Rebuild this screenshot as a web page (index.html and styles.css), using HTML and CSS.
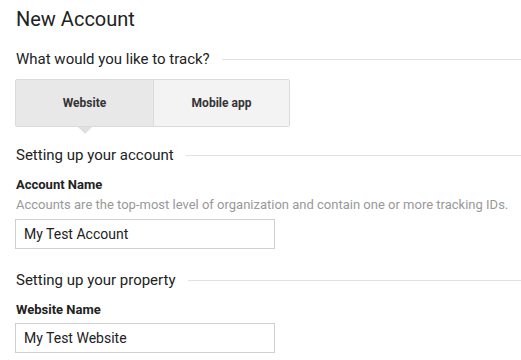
FILE: index.html
```html
<!DOCTYPE html>
<html lang="en">
<head>
  <meta charset="UTF-8" />
  <meta name="viewport" content="width=device-width, initial-scale=1.0" />
  <title>New Account</title>
  <link rel="stylesheet" href="styles.css">
</head>
<body>
  <h1>New Account</h1>

  <div class="section-title">
    <span>What would you like to track?</span>
  </div>
  <div class="tabs">
    <button class="tab active">Website</button>
    <button class="tab">Mobile app</button>
  </div>

  <div class="section-title account-title">
    <span>Setting up your account</span>
  </div>
  <label class="field-label" for="accountName">Account Name</label>
  <p class="hint">Accounts are the top-most level of organization and contain one or more tracking IDs.</p>
  <input id="accountName" class="text-input" type="text" value="My Test Account">

  <div class="section-title property-title">
    <span>Setting up your property</span>
  </div>
  <label class="field-label" for="websiteName">Website Name</label>
  <input id="websiteName" class="text-input" type="text" value="My Test Website">
</body>
</html>
```

FILE: styles.css
```css
body {
  font-family: Roboto, 'Noto Sans', sans-serif;
  margin: 0;
  padding: 7px 0 0 15px;
  background: #fff;
  color: #333;
  overflow: hidden;
}
h1 {
  font-size: 20px;
  line-height: 24px;
  font-weight: 400;
  color: #222;
  margin: 0 0 18px 1px;
}
.section-title {
  display: flex;
  align-items: center;
  gap: 12px;
  font-size: 15px;
  line-height: 20px;
  color: #222;
  margin-left: 1px;
}
.section-title::after {
  content: '';
  flex: 1;
  height: 1px;
  background: #e2e2e2;
}
.tabs {
  display: flex;
  width: 275px;
  height: 48px;
  margin-top: 10px;
  box-sizing: border-box;
  border: 1px solid #dadada;
  border-radius: 2px;
}
.tab {
  position: relative;
  flex: 0 0 137px;
  border: none;
  background: #f3f3f3;
  font-family: inherit;
  font-size: 12px;
  font-weight: 700;
  color: #333;
  padding: 0;
  cursor: pointer;
}
.tab + .tab {
  flex: 1;
  border-left: 1px solid #dadada;
}
.tab.active {
  background: #e8e8e8;
}
.tab.active::after {
  content: '';
  position: absolute;
  left: 50%;
  bottom: -8px;
  margin-left: -7px;
  border-left: 7px solid transparent;
  border-right: 7px solid transparent;
  border-top: 7px solid #e0e0e0;
}
.account-title {
  margin-top: 18px;
}
.property-title {
  margin-top: 21px;
}
.field-label {
  display: block;
  font-size: 13px;
  line-height: 16px;
  font-weight: 700;
  color: #222;
  margin: 12px 0 0 1px;
}
.hint {
  font-size: 13px;
  line-height: 16px;
  color: #999;
  margin: 4px 0 0 1px;
}
.text-input {
  display: block;
  box-sizing: border-box;
  width: 260px;
  height: 30px;
  margin-top: 6px;
  padding: 0 8px;
  border: 1px solid #d0d0d0;
  border-radius: 0;
  font-family: inherit;
  font-size: 14px;
  color: #222;
}
.field-label + .text-input {
  margin-top: 5px;
}
```
